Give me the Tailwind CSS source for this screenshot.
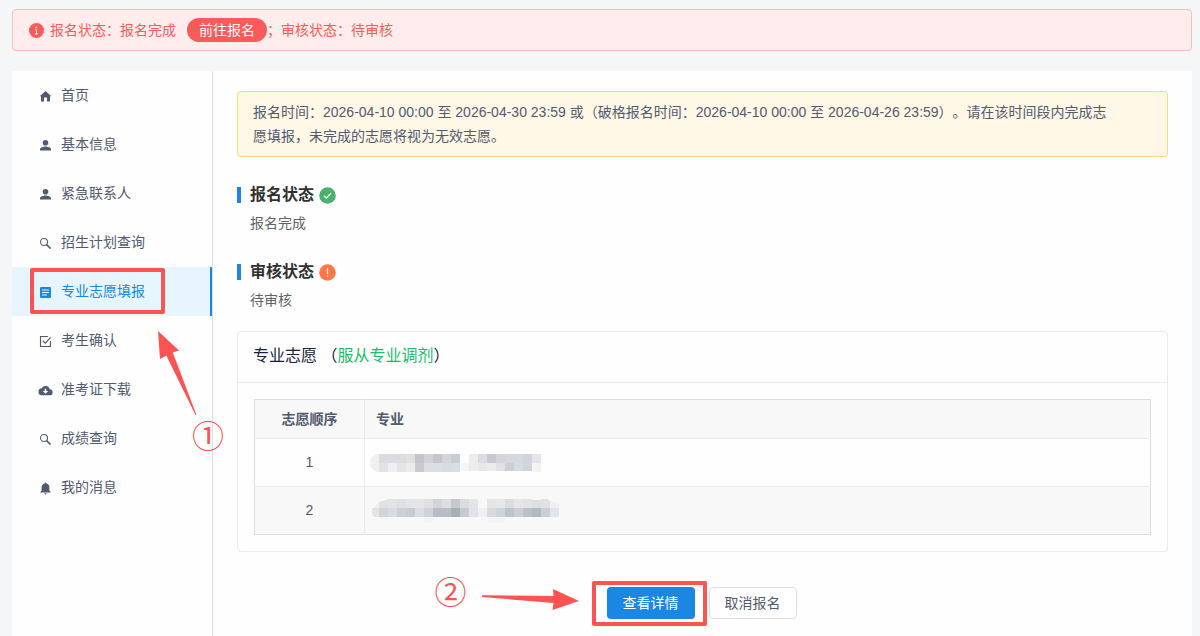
<!DOCTYPE html>
<html lang="zh-CN">
<head>
<meta charset="utf-8">
<meta name="viewport" content="width=device-width, initial-scale=1">
<title>专业志愿填报</title>
<script src="https://cdn.jsdelivr.net/npm/@tailwindcss/browser@4"></script>
</head>
<body class="bg-[#f4f6f8] font-['Liberation_Sans','Noto_Sans_CJK_SC',sans-serif] text-sm text-[#515a6e] [text-spacing-trim:space-all]">
<div class="flex min-h-screen flex-col pl-3 pr-2 pt-[9px]">

  <div role="alert" class="flex h-[42px] items-center rounded border border-[#fdbcbc] bg-[#feedec] px-4 text-[#f95b5b]">
    <svg class="mr-1.5 size-[15px] shrink-0" viewBox="0 0 15 15" aria-hidden="true">
      <circle cx="7.5" cy="7.5" r="7.5" fill="#f95b5b"/>
      <circle cx="7.3" cy="4.3" r="0.9" fill="#fff"/>
      <path d="M6.200 6.400h1.700v4.200h.9v.8H6.200v-.8h.8V7.200h-.8z" fill="#fff"/>
    </svg>
    <span>报名状态：报名完成</span>
    <button type="button" class="ml-[11px] h-6 w-20 rounded-full bg-[#f95b5b] text-white">前往报名</button>
    <span>；审核状态：待审核</span>
  </div>

  <div class="mt-5 flex flex-1 bg-[#fefefe]">
    <nav class="relative w-[201px] shrink-0 border-r border-[#dcdee2]">
      <a href="#" class="flex h-[49px] items-center gap-2 px-[26px] pb-0.5">
        <svg class="mt-1 size-[15px]" viewBox="0 0 15 15" fill="currentColor" aria-hidden="true"><path d="M7.5 2 13.3 7.2H12V12.5H9V8.5H6v4H3V7.2H1.7z"/></svg>
        首页</a>
      <a href="#" class="flex h-[49px] items-center gap-2 px-[26px] pb-0.5">
        <svg class="mt-1 size-[15px]" viewBox="0 0 15 15" fill="currentColor" aria-hidden="true"><circle cx="7.5" cy="4.8" r="2.8"/><path d="M2 12.5v-1.2C2 9.5 5.6 8.6 7.5 8.6s5.5.9 5.5 2.7v1.2z"/></svg>
        基本信息</a>
      <a href="#" class="flex h-[49px] items-center gap-2 px-[26px] pb-0.5">
        <svg class="mt-1 size-[15px]" viewBox="0 0 15 15" fill="currentColor" aria-hidden="true"><circle cx="7.5" cy="4.8" r="2.8"/><path d="M2 12.5v-1.2C2 9.5 5.6 8.6 7.5 8.6s5.5.9 5.5 2.7v1.2z"/></svg>
        紧急联系人</a>
      <a href="#" class="flex h-[49px] items-center gap-2 px-[26px] pb-0.5">
        <svg class="mt-1 size-[15px]" viewBox="0 0 15 15" fill="none" stroke="currentColor" aria-hidden="true"><circle cx="6" cy="6" r="3.5" stroke-width="1.1"/><path d="m8.6 8.6 4 4" stroke-width="1.5"/></svg>
        招生计划查询</a>
      <div class="relative">
        <a href="#" aria-current="page" class="flex h-[49px] items-center gap-2 border-r-2 border-[#1a87e2] bg-[#e7f6fe] px-[26px] pb-0.5 text-[#1a87e2]">
          <svg class="mt-1 size-[15px]" viewBox="0 0 15 15" aria-hidden="true"><rect x="2" y="2" width="11" height="11" rx="1" fill="currentColor"/><path d="M4 5h7M4 7.5h7M4 10h5" stroke="#e7f6fe" stroke-width="1.1"/></svg>
          专业志愿填报</a>
        <div class="pointer-events-none absolute left-[18px] top-px h-[46px] w-[135px] rounded-xs border-4 border-[#fc5353]"></div>
      </div>
      <a href="#" class="flex h-[49px] items-center gap-2 px-[26px] pb-0.5">
        <svg class="mt-1 size-[15px]" viewBox="0 0 15 15" fill="none" stroke="currentColor" stroke-width="1.1" aria-hidden="true"><path d="M10 2.5H2.500v10h10V7"/><path d="m4.800 6.700 2.500 2.500 5.400-5.800" stroke-width="1.2"/></svg>
        考生确认</a>
      <a href="#" class="flex h-[49px] items-center gap-2 px-[26px] pb-0.5">
        <svg class="mt-1 size-[15px]" viewBox="0 0 15 15" aria-hidden="true"><path d="M11.7 6.3A4.2 4.2 0 0 0 3.8 5.300A3.500 3.500 0 0 0 4.200 12.300h7.300a3 3 0 0 0 .2-6z" fill="currentColor"/><path d="M6.700 5.700h1.600v2.300h2L7.500 10.800 4.700 8h2z" fill="#fefefe"/></svg>
        准考证下载</a>
      <a href="#" class="flex h-[49px] items-center gap-2 px-[26px] pb-0.5">
        <svg class="mt-1 size-[15px]" viewBox="0 0 15 15" fill="none" stroke="currentColor" aria-hidden="true"><circle cx="6" cy="6" r="3.5" stroke-width="1.1"/><path d="m8.6 8.6 4 4" stroke-width="1.5"/></svg>
        成绩查询</a>
      <a href="#" class="flex h-[49px] items-center gap-2 px-[26px] pb-0.5">
        <svg class="mt-1 size-[15px]" viewBox="0 0 15 15" fill="currentColor" aria-hidden="true"><path d="M7.500 1.500c.6 0 .9.4.9.9 2 .5 3 2 3 4v3.300l1.300 1.300v.6H2.300V11l1.300-1.300V6.400c0-2 1-3.500 3-4 0-.5.300-.9.900-.9zM6.300 12.200h2.400a1.200 1.200 0 0 1-2.400 0z"/></svg>
        我的消息</a>

      <svg class="pointer-events-none absolute left-[146px] top-[260px] h-[85px] w-10" viewBox="0 0 40 85" aria-hidden="true"><path d="M0 0 21 19.500 14.800 21.500 38.500 84 37.500 84 8.300 24.500 2 28z" fill="#fc5353"/></svg>
      <span class="pointer-events-none absolute left-[180px] top-[350px] text-[32px] leading-8 text-[#fc5353]">①</span>
    </nav>

    <main class="min-w-0 flex-1 px-6 pt-5">
      <div class="rounded border border-[#ffd77a] bg-[#fff8e6] py-2 pl-[15px] pr-12 leading-6">报名时间：2026-04-10 00:00 至 2026-04-30 23:59 或（破格报名时间：2026-04-10 00:00 至 2026-04-26 23:59）。请在该时间段内完成志愿填报，未完成的志愿将视为无效志愿。</div>

      <section class="mt-[26px]">
        <h2 class="flex h-6 items-center text-base font-bold text-[#303133]">
          <span class="mr-[9px] h-4 w-1 bg-[#1a87e2]"></span>报名状态
          <svg class="ml-[5px] size-[17px]" viewBox="0 0 17 17" aria-hidden="true"><circle cx="8.500" cy="8.500" r="8.300" fill="#4caf6e"/><path d="m4.900 8.700 2.400 2.400 4.800-5" fill="none" stroke="#fff" stroke-width="1.200"/></svg>
        </h2>
        <p class="mt-1 pl-[13px] leading-6 text-[#606266]">报名完成</p>
      </section>

      <section class="mt-[25px]">
        <h2 class="flex h-6 items-center text-base font-bold text-[#303133]">
          <span class="mr-[9px] h-4 w-1 bg-[#1a87e2]"></span>审核状态
          <svg class="ml-[5px] size-[17px]" viewBox="0 0 17 17" aria-hidden="true"><circle cx="8.500" cy="8.500" r="8.300" fill="#ff7846"/><path d="M8.500 3.800v6.300M8.500 11.600v1.400" stroke="#fff" stroke-width="1.200"/></svg>
        </h2>
        <p class="mt-1 pl-[13px] leading-6 text-[#606266]">待审核</p>
      </section>

      <section class="mt-[19px] rounded border border-[#e8eaec]">
        <h3 class="flex h-[51px] items-center border-b border-[#e8eaec] px-[15px] pb-0.5 text-base text-[#17233d]"><span>专业志愿&nbsp;（<span class="text-[#19be6b]">服从专业调剂</span>）</span></h3>
        <div class="p-4">
          <table class="w-full border-collapse border border-[#dcdee2]">
            <thead>
              <tr class="h-[39px] bg-[#f8f8f9]">
                <th scope="col" class="w-[110px] border-b border-r border-[#e8eaec] text-center font-bold">志愿顺序</th>
                <th scope="col" class="border-b border-[#e8eaec] px-[11px] text-left font-bold">专业</th>
              </tr>
            </thead>
            <tbody>
              <tr class="h-12">
                <td class="border-b border-r border-[#e8eaec] pb-0.5 text-center">1</td>
                <td class="border-b border-[#e8eaec] pl-[5px]">
                  <svg class="block h-[18px] w-[172px]" viewBox="0 0 172 18" shape-rendering="crispEdges" role="img" aria-label="已隐藏">
                    <path d="M9 0v18a9 9 0 0 1 0-18z" fill="#f0f0f1"/>
                    <g><path d="M9 0h9v9H9z" fill="#dcdbdf"/><path d="M18 0h9v9h-9z" fill="#dadce0"/><path d="M27 0h9v9h-9z" fill="#d9dddf"/><path d="M36 0h9v9h-9z" fill="#e0e0e2"/><path d="M45 0h9v9h-9z" fill="#c4c4cb"/><path d="M54 0h9v9h-9z" fill="#d1d2d8"/><path d="M63 0h9v9h-9z" fill="#c4c6ca"/><path d="M72 0h9v9h-9z" fill="#d2d5da"/><path d="M81 0h9v9h-9z" fill="#c8ccd6"/><path d="M99 0h9v9h-9z" fill="#ecedf0"/><path d="M108 0h9v9h-9z" fill="#d9dde0"/><path d="M117 0h9v9h-9z" fill="#c9cad1"/><path d="M126 0h9v9h-9z" fill="#d4d5d9"/><path d="M135 0h9v9h-9z" fill="#d7d8da"/><path d="M144 0h9v9h-9z" fill="#d7d8db"/><path d="M153 0h9v9h-9z" fill="#d0d5dd"/><path d="M162 0h9v9h-9z" fill="#e5e5e7"/></g>
                    <g><path d="M9 9h9v9H9z" fill="#e2e3e9"/><path d="M18 9h9v9h-9z" fill="#edeff5"/><path d="M27 9h9v9h-9z" fill="#e5e5e8"/><path d="M36 9h9v9h-9z" fill="#ececec"/><path d="M45 9h9v9h-9z" fill="#c9c9d0"/><path d="M54 9h9v9h-9z" fill="#dedee1"/><path d="M63 9h9v9h-9z" fill="#dcdfe2"/><path d="M72 9h9v9h-9z" fill="#d9dddf"/><path d="M81 9h9v9h-9z" fill="#d9dee1"/><path d="M90 9h9v8h-9z" fill="#f5f5f7"/><path d="M99 9h9v8h-9z" fill="#ecedf0"/><path d="M108 9h9v8h-9z" fill="#e8e8e9"/><path d="M117 9h9v8h-9z" fill="#ebecef"/><path d="M126 9h9v8h-9z" fill="#e0e1e4"/><path d="M135 9h9v8h-9z" fill="#cccfd3"/><path d="M144 9h9v8h-9z" fill="#d9dbdf"/><path d="M153 9h9v8h-9z" fill="#d0d5dd"/><path d="M162 9h9v9h-9z" fill="#f3f3f4"/></g>
                  </svg>
                </td>
              </tr>
              <tr class="h-12 bg-[#f8f8f9]">
                <td class="border-r border-[#e8eaec] pb-0.5 text-center">2</td>
                <td class="pl-[5px]">
                  <svg class="block h-6 w-[190px]" viewBox="0 0 190 24" shape-rendering="crispEdges" role="img" aria-label="已隐藏">
                    <path d="M3 9 9 3v6z" fill="#eeeff0"/><path d="M2 9h7v9H4l-2-4z" fill="#e3e4e5"/>
                    <g><path d="m9 3 9-3v9H9z" fill="#e1e2e6"/><path d="M18 0h9v9h-9z" fill="#e2e3e6"/><path d="M27 0h9v9h-9z" fill="#dfe0e3"/><path d="M36 0h9v9h-9z" fill="#e3e4e7"/><path d="M45 0h9v9h-9z" fill="#e4e5e6"/><path d="M54 0h9v9h-9z" fill="#e0e0e4"/><path d="M63 0h9v9h-9z" fill="#d2d4da"/><path d="M72 0h9v9h-9z" fill="#dcdee1"/><path d="M81 0h9v9h-9z" fill="#c7c9d1"/><path d="M90 0h9v9h-9z" fill="#dadde0"/><path d="M99 0h9v9h-9z" fill="#e4e5e8"/><path d="M117 0h9v9h-9z" fill="#e5e5e8"/><path d="M126 0h9v9h-9z" fill="#e6e7e9"/><path d="M135 0h9v9h-9z" fill="#dadee1"/><path d="M144 0h9v9h-9z" fill="#e7e7e9"/><path d="M153 0h9v9h-9z" fill="#e2e3e6"/><path d="M162 1h9v8h-9z" fill="#dce0e3"/><path d="M171 0h6l3 2v7h-9z" fill="#dfe1e4"/><path d="m180 2 9 3v4h-9z" fill="#eeeff2"/></g>
                    <g><path d="M9 9h9v9H9z" fill="#d3d4d9"/><path d="M18 9h9v9h-9z" fill="#d9dcdf"/><path d="M27 9h9v9h-9z" fill="#cccfd4"/><path d="M36 9h9v9h-9z" fill="#c9cbd0"/><path d="M45 9h9v9h-9z" fill="#dadee2"/><path d="M54 9h9v9h-9z" fill="#cfd2d7"/><path d="M63 9h18v9H63z" fill="#b9bcc6"/><path d="M81 9h9v9h-9z" fill="#abadb9"/><path d="M90 9h9v9h-9z" fill="#c9cad0"/><path d="M99 9h9v9h-9z" fill="#e1e3e6"/><path d="M108 9h9v9h-9z" fill="#eef0f3"/><path d="M117 9h9v9h-9z" fill="#dadade"/><path d="M126 9h9v9h-9z" fill="#ced4de"/><path d="M135 9h9v9h-9z" fill="#c2c3ca"/><path d="M144 9h9v9h-9z" fill="#cbced3"/><path d="M153 9h9v9h-9z" fill="#bec0c8"/><path d="M162 9h9v9h-9z" fill="#b6b8c1"/><path d="M171 9h9v9h-9z" fill="#cbced3"/><path d="M180 9h9v9h-9z" fill="#e3e4e7"/></g>
                    <path d="M9 18h9v4H12zM54 18h9v6h-9zM117 18h18v6h-18z" fill="#f3f4f6"/>
                  </svg>
                </td>
              </tr>
            </tbody>
          </table>
        </div>
      </section>

      <div class="flex justify-center gap-3.5 pr-0.5 pt-[35px]">
        <div class="relative">
          <button type="button" class="h-8 w-[88px] rounded bg-[#1a87e2] text-white">查看详情</button>
          <div class="pointer-events-none absolute -left-[15px] -top-1.5 h-[45px] w-[115px] rounded-xs border-4 border-[#fc5353]"></div>
          <svg class="pointer-events-none absolute -left-[125px] top-0.5 h-[22px] w-[98px]" viewBox="0 0 98 22" aria-hidden="true"><path d="M0 6.200 71.500 7 71 0 97 12 70.500 21 71.500 14 0 8z" fill="#fc5353"/></svg>
          <span class="pointer-events-none absolute -left-[172px] -top-2.5 text-[32px] leading-8 text-[#fc5353]">②</span>
        </div>
        <button type="button" class="h-8 w-[88px] rounded border border-[#dcdee2] bg-white">取消报名</button>
      </div>
    </main>
  </div>
</div>
</body>
</html>
